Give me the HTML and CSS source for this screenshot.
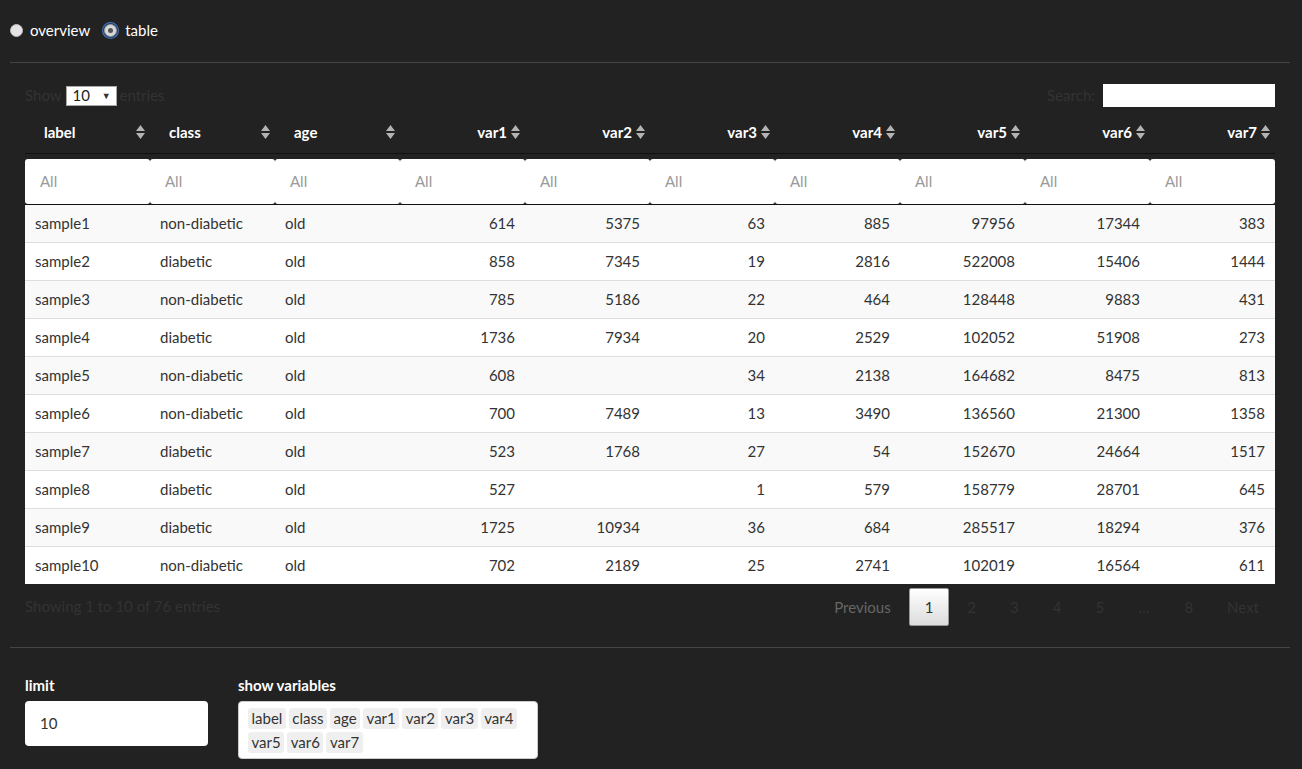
FILE: index.html
```html
<!DOCTYPE html>
<html>
<head>
<meta charset="utf-8">
<link rel="stylesheet" href="styles.css">
</head>
<body>
<div class="page">
  <div class="radios">
    <label class="radio"><span class="rb"></span>overview</label>
    <label class="radio"><span class="rb checked"><span class="dot"></span></span>table</label>
  </div>
  <hr class="rule">
  <div class="dt">
    <div class="dt-top">
      <div class="length">Show <span class="sel">10<span class="arr">▼</span></span> entries</div>
      <div class="search">Search: <span class="search-in"></span></div>
    </div>
    <table class="tbl">
      <colgroup>
        <col><col><col><col><col><col><col><col><col><col>
      </colgroup>
      <thead>
        <tr class="hrow">
          <th>label<svg class="sort" viewBox="0 0 9 14"><path d="M0 6L4.5 0L9 6Z M0 8L4.5 14L9 8Z"/></svg></th>
          <th>class<svg class="sort" viewBox="0 0 9 14"><path d="M0 6L4.5 0L9 6Z M0 8L4.5 14L9 8Z"/></svg></th>
          <th>age<svg class="sort" viewBox="0 0 9 14"><path d="M0 6L4.5 0L9 6Z M0 8L4.5 14L9 8Z"/></svg></th>
          <th class="r">var1<svg class="sort" viewBox="0 0 9 14"><path d="M0 6L4.5 0L9 6Z M0 8L4.5 14L9 8Z"/></svg></th>
          <th class="r">var2<svg class="sort" viewBox="0 0 9 14"><path d="M0 6L4.5 0L9 6Z M0 8L4.5 14L9 8Z"/></svg></th>
          <th class="r">var3<svg class="sort" viewBox="0 0 9 14"><path d="M0 6L4.5 0L9 6Z M0 8L4.5 14L9 8Z"/></svg></th>
          <th class="r">var4<svg class="sort" viewBox="0 0 9 14"><path d="M0 6L4.5 0L9 6Z M0 8L4.5 14L9 8Z"/></svg></th>
          <th class="r">var5<svg class="sort" viewBox="0 0 9 14"><path d="M0 6L4.5 0L9 6Z M0 8L4.5 14L9 8Z"/></svg></th>
          <th class="r">var6<svg class="sort" viewBox="0 0 9 14"><path d="M0 6L4.5 0L9 6Z M0 8L4.5 14L9 8Z"/></svg></th>
          <th class="r">var7<svg class="sort" viewBox="0 0 9 14"><path d="M0 6L4.5 0L9 6Z M0 8L4.5 14L9 8Z"/></svg></th>
        </tr>
        <tr class="frow">
          <td><div class="fbox">All</div></td><td><div class="fbox">All</div></td><td><div class="fbox">All</div></td><td><div class="fbox">All</div></td><td><div class="fbox">All</div></td>
          <td><div class="fbox">All</div></td><td><div class="fbox">All</div></td><td><div class="fbox">All</div></td><td><div class="fbox">All</div></td><td><div class="fbox">All</div></td>
        </tr>
      </thead>
      <tbody>
        <tr><td>sample1</td><td>non-diabetic</td><td>old</td><td class="r">614</td><td class="r">5375</td><td class="r">63</td><td class="r">885</td><td class="r">97956</td><td class="r">17344</td><td class="r">383</td></tr>
        <tr><td>sample2</td><td>diabetic</td><td>old</td><td class="r">858</td><td class="r">7345</td><td class="r">19</td><td class="r">2816</td><td class="r">522008</td><td class="r">15406</td><td class="r">1444</td></tr>
        <tr><td>sample3</td><td>non-diabetic</td><td>old</td><td class="r">785</td><td class="r">5186</td><td class="r">22</td><td class="r">464</td><td class="r">128448</td><td class="r">9883</td><td class="r">431</td></tr>
        <tr><td>sample4</td><td>diabetic</td><td>old</td><td class="r">1736</td><td class="r">7934</td><td class="r">20</td><td class="r">2529</td><td class="r">102052</td><td class="r">51908</td><td class="r">273</td></tr>
        <tr><td>sample5</td><td>non-diabetic</td><td>old</td><td class="r">608</td><td class="r"></td><td class="r">34</td><td class="r">2138</td><td class="r">164682</td><td class="r">8475</td><td class="r">813</td></tr>
        <tr><td>sample6</td><td>non-diabetic</td><td>old</td><td class="r">700</td><td class="r">7489</td><td class="r">13</td><td class="r">3490</td><td class="r">136560</td><td class="r">21300</td><td class="r">1358</td></tr>
        <tr><td>sample7</td><td>diabetic</td><td>old</td><td class="r">523</td><td class="r">1768</td><td class="r">27</td><td class="r">54</td><td class="r">152670</td><td class="r">24664</td><td class="r">1517</td></tr>
        <tr><td>sample8</td><td>diabetic</td><td>old</td><td class="r">527</td><td class="r"></td><td class="r">1</td><td class="r">579</td><td class="r">158779</td><td class="r">28701</td><td class="r">645</td></tr>
        <tr><td>sample9</td><td>diabetic</td><td>old</td><td class="r">1725</td><td class="r">10934</td><td class="r">36</td><td class="r">684</td><td class="r">285517</td><td class="r">18294</td><td class="r">376</td></tr>
        <tr><td>sample10</td><td>non-diabetic</td><td>old</td><td class="r">702</td><td class="r">2189</td><td class="r">25</td><td class="r">2741</td><td class="r">102019</td><td class="r">16564</td><td class="r">611</td></tr>
      </tbody>
    </table>
    <div class="dt-bottom">
      <div class="info">Showing 1 to 10 of 76 entries</div>
      <div class="pager">
        <span class="pbtn disabled">Previous</span>
        <span class="pbtn current">1</span>
        <span class="pbtn">2</span>
        <span class="pbtn">3</span>
        <span class="pbtn">4</span>
        <span class="pbtn">5</span>
        <span class="ellipsis">…</span>
        <span class="pbtn">8</span>
        <span class="pbtn">Next</span>
      </div>
    </div>
  </div>
  <hr class="rule rule2">
  <div class="controls">
    <div class="group">
      <div class="lbl">limit</div>
      <div class="inp">10</div>
    </div>
    <div class="group">
      <div class="lbl">show variables</div>
      <div class="multi">
        <span class="tag">label</span><span class="tag">class</span><span class="tag">age</span><span class="tag">var1</span><span class="tag">var2</span><span class="tag">var3</span><span class="tag">var4</span><span class="tag">var5</span><span class="tag">var6</span><span class="tag">var7</span>
      </div>
    </div>
  </div>
</div>
</body>
</html>
```

FILE: styles.css
```css
html, body {
  margin: 0;
  padding: 0;
  background: #222222;
}
body {
  font-family: Lato, "Open Sans", sans-serif;
  font-size: 15px;
  line-height: 21px;
  color: #ffffff;
}
.page {
  padding: 20px 12px 0 10px;
}
.radios {
  display: flex;
  align-items: center;
  gap: 14px;
  height: 21px;
}
.radio {
  display: flex;
  align-items: center;
  gap: 7px;
}
.radio + .radio {
  gap: 8px;
}
.rb {
  width: 13px;
  height: 13px;
  border-radius: 50%;
  background: #e4e4e4;
  border: 1px solid #bdbdbd;
  box-sizing: border-box;
  display: inline-flex;
  align-items: center;
  justify-content: center;
}
.rb.checked {
  width: 13px;
  height: 13px;
  background: #d8d8d8;
  border: 1px solid #9a9a9a;
  box-shadow: 0 0 0 1px #1f3f6e, 0 0 0 2px #4a76b5;
  border-radius: 50%;
}
.rb .dot {
  width: 5px;
  height: 5px;
  border-radius: 50%;
  background: #555;
}
.rule {
  border: 0;
  border-top: 1px solid #464545;
  margin: 21px 0 0 0;
}
.dt {
  padding: 0 15px;
}
.dt-top {
  display: flex;
  justify-content: space-between;
  align-items: center;
  height: 23px;
  margin-top: 21px;
  margin-bottom: 8px;
  color: #333333;
}
.length {
  display: flex;
  align-items: center;
}
.sel {
  display: inline-flex;
  align-items: center;
  justify-content: space-between;
  width: 51px;
  height: 20px;
  box-sizing: border-box;
  margin: 0 3px 0 4px;
  background: #fff;
  border: 1px solid #a9a9a9;
  color: #222;
  padding: 0 5px 0 6px;
  font-size: 15px;
}
.sel .arr {
  font-size: 9px;
  color: #333;
}
.search {
  display: flex;
  align-items: center;
}
.search-in {
  display: inline-block;
  width: 172px;
  height: 23px;
  background: #fff;
  margin-left: 8px;
}
.tbl {
  width: 1250px;
  table-layout: fixed;
  border-collapse: collapse;
  border-spacing: 0;
}
.tbl col {
  width: 125px;
}
.hrow th {
  position: relative;
  text-align: left;
  font-weight: bold;
  color: #fff;
  padding: 6px 18px 10px 19px;
  line-height: 22px;
  border-bottom: 1px solid #111111;
  background: #222;
}
.hrow th.r {
  text-align: right;
  padding-right: 18px;
}
.sort {
  position: absolute;
  right: 5px;
  top: 10px;
  width: 9px;
  height: 14px;
  fill: #b3b3b3;
}
.frow td {
  padding: 5px 0 0 0;
  border-bottom: 1px solid #111111;
  background: #222;
}
.fbox {
  height: 45px;
  background: #fff;
  border-radius: 3px;
  color: #999999;
  padding-left: 15px;
  line-height: 45px;
  font-size: 15px;
}
.tbl tbody td {
  padding: 8px 10px;
  line-height: 21px;
  color: #333333;
  background: #ffffff;
  border-bottom: 1px solid #dddddd;
  white-space: nowrap;
}
.tbl tbody tr:nth-child(odd) td {
  background: #f9f9f9;
}
.tbl tbody tr:last-child td {
  border-bottom: 0;
}
.tbl td.r {
  text-align: right;
}
.dt-bottom {
  display: flex;
  justify-content: space-between;
  align-items: flex-start;
  color: #333333;
}
.info {
  padding-top: 12px;
}
.pager {
  display: flex;
  align-items: center;
  padding-top: 4px;
}
.pbtn {
  display: inline-block;
  padding: 7.5px 15px;
  margin-left: 2px;
  border: 1px solid transparent;
  border-radius: 2px;
  color: #333333;
  min-width: 8px;
  text-align: center;
}
.pbtn.disabled {
  color: #666666;
}
.pbtn.current {
  color: #333;
  background: linear-gradient(to bottom, #ffffff 0%, #dcdcdc 100%);
  border: 1px solid #979797;
}
.ellipsis {
  display: inline-block;
  padding: 0 17px 0 18px;
  color: #333;
}
.rule2 {
  margin-top: 21px;
}
.controls {
  display: flex;
  gap: 30px;
  padding: 27px 15px 0 15px;
}
.lbl {
  font-weight: bold;
  margin-bottom: 5px;
}
.inp {
  width: 183px;
  height: 45px;
  box-sizing: border-box;
  background: #fff;
  border-radius: 4px;
  padding: 12px 15px;
  color: #333;
}
.multi {
  width: 300px;
  box-sizing: border-box;
  background: #fff;
  border-radius: 4px;
  border: 1px solid #ccc;
  padding: 6px 9px 5px 9px;
  display: flex;
  flex-wrap: wrap;
  gap: 3px;
}
.tag {
  background: #efefef;
  color: #333;
  border-radius: 3px;
  padding: 0 3.5px;
  line-height: 21px;
}
```
